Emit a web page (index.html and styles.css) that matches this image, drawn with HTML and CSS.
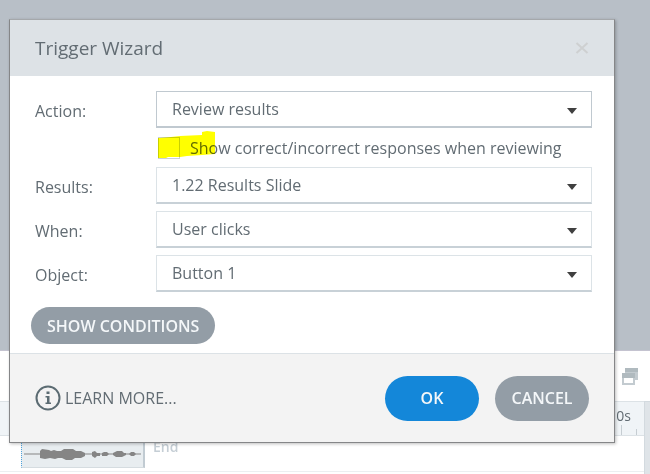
FILE: index.html
```html
<!DOCTYPE html>
<html lang="en">
<head>
<meta charset="utf-8">
<title>Trigger Wizard</title>
<link rel="stylesheet" href="styles.css">
</head>
<body>
<div class="workspace">
  <div class="stage"></div>
  <div class="toolbar">
    <svg class="windows" width="16" height="18" viewBox="0 0 16 18" aria-hidden="true">
      <path d="M3 0h13v12h-3V5H3z" fill="#c3cbd0"/>
      <path d="M3 0h13v4H3z" fill="#b0babf"/>
      <path d="M1 6h11v10H1z" fill="#fff" stroke="#c3cbd0" stroke-width="2"/>
      <path d="M0 5h13v5H0z" fill="#b0babf"/>
    </svg>
  </div>
  <div class="timeline">
    <div class="tracks">
      <div class="ruler"><span class="tick-label">0s</span><i class="tick tall"></i><i class="tick"></i></div>
      <div class="track">
        <div class="clip">
          <svg width="118" height="12" viewBox="0 0 118 12" aria-hidden="true">
            <path d="M0 6h117" stroke="#858585"/>
            <path d="M16 3l2-2 7 1 2 1 3-1 3 1 4 0 3-2 9 0 3 2 5 0 4 2v3l-4 2-6 0-3 2-6 0-4-2-4 0-3 1-5-1-5 1-5-1zM68 4l3-1 2 2 3 0v3l-3 0-2 2-3-2zM78 5l2-1h3l2 2-2 2h-5zM89 5l4-2h5l2 2 2 0v2l-4 2h-6l-3-2zM107 4h3l2 2-2 2h-3l-2-2z" fill="#858585"/>
          </svg>
        </div>
        <span class="end-label">End</span>
      </div>
    </div>
    <div class="scroll"></div>
  </div>
</div>

<form class="dialog" role="dialog" aria-labelledby="title">
  <header class="head">
    <h1 id="title">Trigger Wizard</h1>
    <button class="close" type="button" aria-label="Close">
      <svg width="14" height="12" viewBox="0 0 14 12" aria-hidden="true"><path d="M1.500 1l11 10M12.500 1l-11 10" stroke="#ced0d1" stroke-width="2"/></svg>
    </button>
  </header>
  <div class="body">
    <div class="fields">
      <label for="action">Action:</label>
      <div class="pick strong"><select id="action"><option>Review results</option></select></div>
      <div class="check">
        <input type="checkbox" id="show">
        <label for="show">Show correct/incorrect responses when reviewing</label>
        <svg class="marker" width="60" height="30" viewBox="0 0 60 30" aria-hidden="true"><path d="M2 8l12-1 9-1 22-1v-3l5-1 8 1v22l-13 1-15 1-7 1-12 0-2 1H1V8z" fill="#ff0"/></svg>
      </div>
      <label for="results">Results:</label>
      <div class="pick"><select id="results"><option>1.22 Results Slide</option></select></div>
      <label for="when">When:</label>
      <div class="pick"><select id="when"><option>User clicks</option></select></div>
      <label for="object">Object:</label>
      <div class="pick"><select id="object"><option>Button 1</option></select></div>
    </div>
    <button class="pill conditions" type="button">SHOW CONDITIONS</button>
  </div>
  <footer class="foot">
    <a class="learn" href="#">
      <svg width="26" height="26" viewBox="0 0 26 26" aria-hidden="true">
        <circle cx="13" cy="13" r="11.500" fill="none" stroke="#5b6b72" stroke-width="2"/>
        <path d="M11.500 6.500h3v2.500h-3zM10.500 11h4v6.500h1.500V19h-5.500v-1.500H12v-5h-1.500z" fill="#5b6b72"/>
      </svg>
      <span>LEARN MORE...</span>
    </a>
    <button class="pill ok" type="submit">OK</button>
    <button class="pill cancel" type="button">CANCEL</button>
  </footer>
</form>
</body>
</html>
```
FILE: styles.css
```css
* { box-sizing: border-box; }

body {
  margin: 0;
  min-height: 100vh;
  font: 16px/20px "Open Sans", "Noto Sans", sans-serif;
  color: #626c73;
}

button, select { font: inherit; color: inherit; border: 0; margin: 0; }

.workspace { display: flex; flex-direction: column; height: 100vh; background: #fff; }
.stage { flex: 1; background: #b8bfc7; }

.toolbar {
  display: flex;
  justify-content: flex-end;
  height: 51px;
  padding: 17px 12px 0;
  border-top: 1px solid #c4c3d0;
}

.timeline { display: flex; height: 73px; }
.tracks { flex: 1; }
.scroll { width: 6px; background: #dfe4e8; border-left: 1px solid #d3dadf; border-top: 1px solid #d3dadf; }

.ruler {
  display: flex;
  justify-content: flex-end;
  align-items: flex-end;
  gap: 14px;
  height: 35px;
  padding-right: 7px;
  background: #f0f4f7;
  border: solid #dce2e6;
  border-width: 1px 0;
}
.tick-label { align-self: flex-start; margin: 4px -24px 0 0; font-size: 14px; }
.tick { width: 1px; height: 6px; background: #c6cdd2; }
.tick.tall { height: 10px; }

.track { display: flex; height: 36px; border-bottom: 1px solid #eceff1; }
.clip {
  width: 124px;
  height: 32px;
  margin-left: 21px;
  padding: 12px 2px 0;
  background: #e8edf0;
  border-left: 1px dotted #4da3dc;
  border-right: 2px solid #c1cbd2;
  border-bottom: 1px solid #d5dce0;
}
.clip svg { display: block; }
.end-label { margin: 1px 8px; font-size: 14px; font-weight: 600; color: #c5ced5; }

.dialog {
  position: absolute;
  inset: 19px 35px auto 9px;
  background: #fff;
  border: 1px solid #858688;
  border-top-color: #a5a8ab;
  box-shadow: 1px 1px 3px rgba(0, 0, 0, .25);
}

.head {
  display: flex;
  align-items: center;
  justify-content: space-between;
  height: 56px;
  padding: 0 25px;
  background: #dde2e6;
}
.head h1 { margin: 0; font-size: 19px; font-weight: 400; }
.close { display: flex; padding: 0; background: none; }

.body { padding: 15px 22px 9px 21px; }
.fields {
  display: grid;
  grid-template-columns: 121px 1fr;
  row-gap: 7px;
  align-items: center;
  padding-left: 4px;
}
.fields > label { padding-top: 2px; }

.pick {
  display: flex;
  position: relative;
  height: 37px;
  border: 1px solid #dce3e7;
  border-bottom: 2px solid #c8d1d7;
}
.pick.strong { border-color: #c0c9d0; }
.pick select {
  flex: 1;
  padding: 0 15px;
  background: #fff;
  appearance: none;
}
.pick::after {
  content: "";
  position: absolute;
  right: 14px;
  top: 16px;
  border: solid transparent;
  border-width: 6px 5px 0;
  border-top-color: #404040;
}

.check {
  grid-column: 2;
  display: flex;
  align-items: center;
  gap: 10px;
  position: relative;
  height: 25px;
  padding-left: 2px;
}
.check input {
  appearance: none;
  width: 22px;
  height: 22px;
  margin: 0;
  border: 1px solid #c9d0d5;
}
.marker { position: absolute; left: 1px; top: -5px; mix-blend-mode: multiply; pointer-events: none; }

.pill { border-radius: 24px; color: #f4f7f9; background: #939da6; font-weight: 600; }
.conditions { display: block; height: 37px; margin-top: 15px; padding: 0 16px; }

.foot {
  display: flex;
  align-items: center;
  gap: 16px;
  height: 89px;
  padding: 0 25px;
  background: #f3f3f3;
  border-top: 1px solid #dce2e6;
}
.learn { display: flex; align-items: center; gap: 4px; margin-right: auto; color: inherit; text-decoration: none; }
.ok, .cancel { width: 94px; height: 45px; padding: 0; }
.ok { background: #1487d9; }
```
